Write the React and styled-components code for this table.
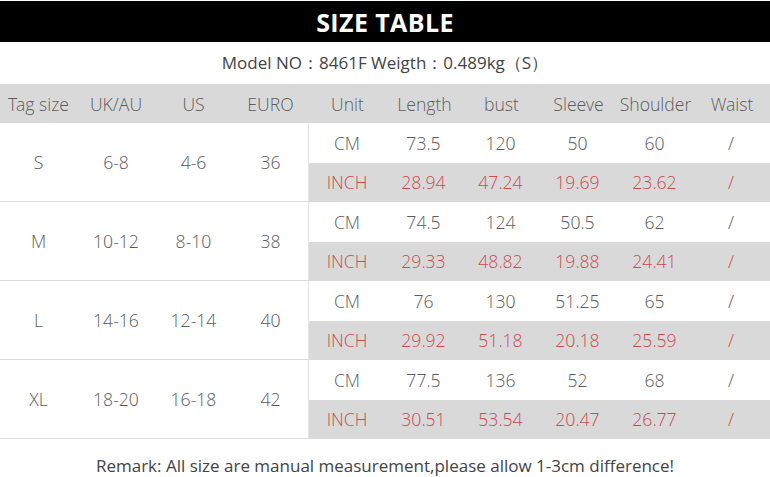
import React from "react";
import styled, { createGlobalStyle } from "styled-components";

const Global = createGlobalStyle`
  html, body { margin: 0; padding: 0; background: #fff; }
  body { font-family: "Open Sans", "Noto Sans", "Liberation Sans", sans-serif; }
`;

const Page = styled.div`
  width: 770px;
  padding-top: 1px;
  display: flex;
  flex-direction: column;
`;

const TitleBar = styled.div`
  height: 41px;
  background: #000;
  color: #fff;
  display: flex;
  align-items: center;
  justify-content: center;
  font-size: 25px;
  font-weight: 700;
  letter-spacing: 0.4px;
`;

const ModelLine = styled.div`
  height: 42px;
  display: flex;
  align-items: center;
  justify-content: center;
  font-size: 17px;
  font-weight: 400;
  color: #444;
`;

const COLS = "77px 78px 77px 77px 77px 77px 77px 77px 77px 76px";

const HeaderRow = styled.div`
  display: grid;
  grid-template-columns: ${COLS};
  height: 39px;
  background: #d9d9d9;
`;

const Cell = styled.div`
  display: flex;
  align-items: center;
  justify-content: center;
  font-family: "Open Sans Light", "Open Sans", sans-serif;
  font-size: 17.6px;
  font-weight: 300;
  color: ${(p) => (p.$red ? "#c84a52" : "#5c5c5c")};
  white-space: nowrap;
`;

const Group = styled.div`
  display: flex;
  height: 79px;
`;

const LeftPart = styled.div`
  display: grid;
  grid-template-columns: 77px 78px 77px 77px;
  width: 309px;
  box-sizing: border-box;
  border-bottom: 1px solid #dcdcdc;
  border-right: 1px solid #e6e6e6;
`;

const RightPart = styled.div`
  display: flex;
  flex-direction: column;
  flex: 1;
`;

const UnitRow = styled.div`
  display: grid;
  grid-template-columns: 76px 77px 77px 77px 77px 76px;
  flex: 1;
  background: ${(p) => (p.$inch ? "#d9d9d9" : "#fff")};
`;

const Remark = styled.div`
  height: 52px;
  display: flex;
  align-items: center;
  justify-content: center;
  font-size: 17px;
  font-weight: 400;
  color: #444;
`;

const headers = ["Tag size", "UK/AU", "US", "EURO", "Unit", "Length", "bust", "Sleeve", "Shoulder", "Waist"];

const data = [
  { tag: "S", uk: "6-8", us: "4-6", eu: "36", cm: ["73.5", "120", "50", "60", "/"], inch: ["28.94", "47.24", "19.69", "23.62", "/"] },
  { tag: "M", uk: "10-12", us: "8-10", eu: "38", cm: ["74.5", "124", "50.5", "62", "/"], inch: ["29.33", "48.82", "19.88", "24.41", "/"] },
  { tag: "L", uk: "14-16", us: "12-14", eu: "40", cm: ["76", "130", "51.25", "65", "/"], inch: ["29.92", "51.18", "20.18", "25.59", "/"] },
  { tag: "XL", uk: "18-20", us: "16-18", eu: "42", cm: ["77.5", "136", "52", "68", "/"], inch: ["30.51", "53.54", "20.47", "26.77", "/"] },
];

export default function App() {
  return (
    <>
      <Global />
      <Page>
        <TitleBar>SIZE TABLE</TitleBar>
        <ModelLine>Model NO：8461F Weigth：0.489kg（S）</ModelLine>
        <HeaderRow>
          {headers.map((h) => (
            <Cell key={h}>{h}</Cell>
          ))}
        </HeaderRow>
        {data.map((d) => (
          <Group key={d.tag}>
            <LeftPart>
              <Cell>{d.tag}</Cell>
              <Cell>{d.uk}</Cell>
              <Cell>{d.us}</Cell>
              <Cell>{d.eu}</Cell>
            </LeftPart>
            <RightPart>
              <UnitRow>
                <Cell>CM</Cell>
                {d.cm.map((v, i) => (
                  <Cell key={i}>{v}</Cell>
                ))}
              </UnitRow>
              <UnitRow $inch>
                <Cell $red>INCH</Cell>
                {d.inch.map((v, i) => (
                  <Cell key={i} $red>{v}</Cell>
                ))}
              </UnitRow>
            </RightPart>
          </Group>
        ))}
        <Remark>Remark: All size are manual measurement,please allow 1-3cm difference!</Remark>
      </Page>
    </>
  );
}
